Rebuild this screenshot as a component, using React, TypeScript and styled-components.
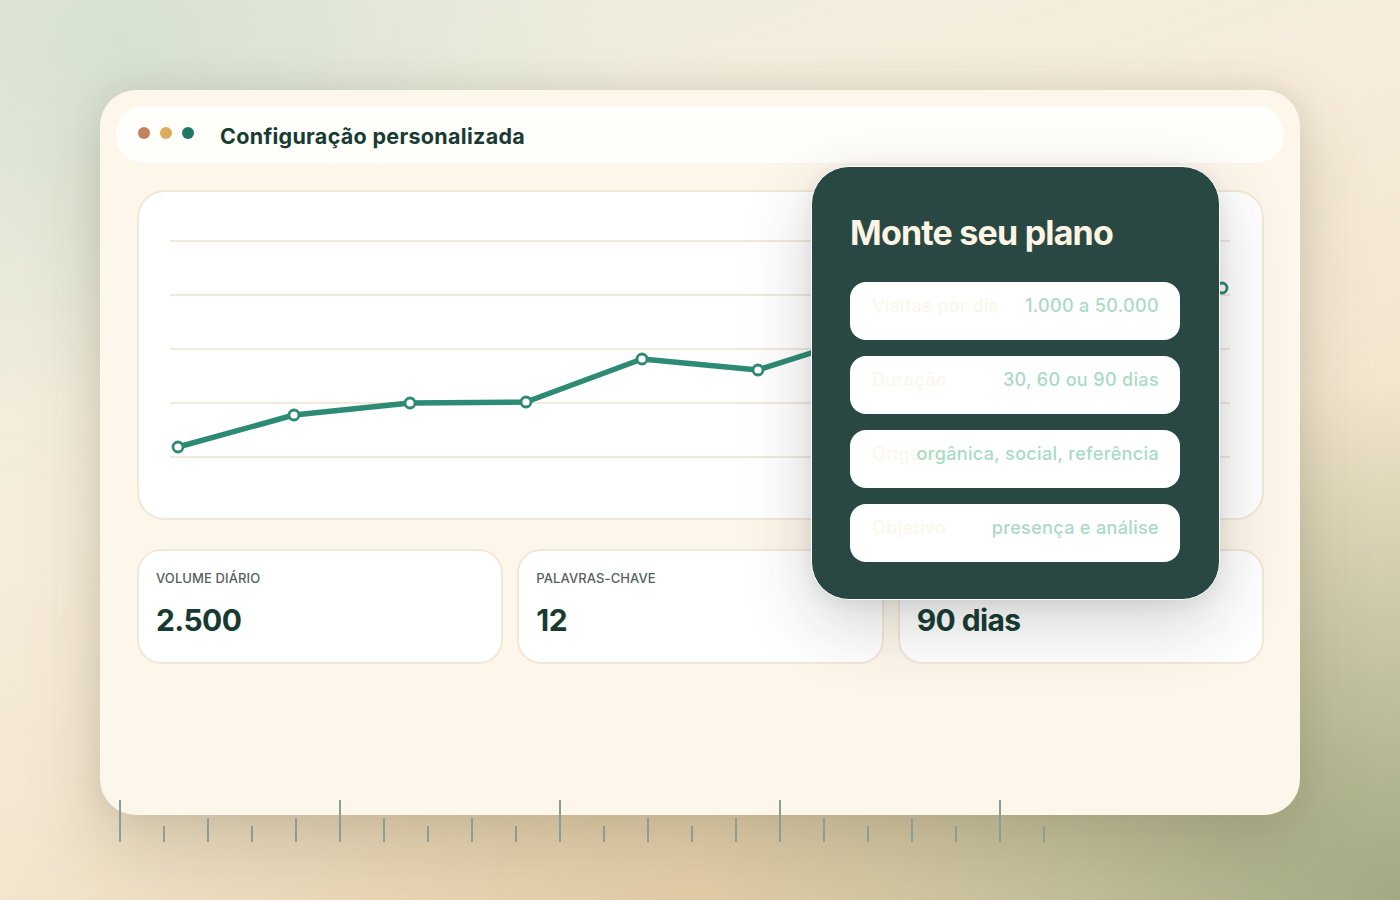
import * as React from 'react';
import styled, { createGlobalStyle } from 'styled-components';

const GlobalStyle = createGlobalStyle`
  html, body {
    margin: 0;
    padding: 0;
  }
  body {
    width: 1400px;
    height: 900px;
    overflow: hidden;
    font-family: Inter, 'Noto Sans', 'Liberation Sans', sans-serif;
    background:
      radial-gradient(ellipse 520px 380px at 120px 40px, rgba(212, 224, 208, 0.9), rgba(212, 224, 208, 0) 100%),
      radial-gradient(ellipse 700px 520px at 1400px 900px, rgba(160, 170, 130, 1), rgba(170, 178, 140, 0) 100%),
      radial-gradient(ellipse 700px 300px at 700px 900px, rgba(226, 204, 166, 1), rgba(226, 204, 166, 0) 100%),
      linear-gradient(160deg, #eceee0 0%, #f6ecda 40%, #eedcbc 100%);
  }
`;

const points = [
  [41, 257],
  [157, 225],
  [273, 213],
  [389, 212],
  [505, 169],
  [621, 180],
  [737, 143],
  [853, 128],
  [969, 112],
  [1085, 98],
];

const gridLines = [51, 105, 159, 213, 267];

const stats = [
  { label: 'VOLUME DIÁRIO', value: '2.500' },
  { label: 'PALAVRAS-CHAVE', value: '12' },
  { label: 'DURAÇÃO', value: '90 dias' },
];

const planRows = [
  { label: 'Visitas por dia', value: '1.000 a 50.000' },
  { label: 'Duração', value: '30, 60 ou 90 dias' },
  { label: 'Origem', value: 'orgânica, social, referência' },
  { label: 'Objetivo', value: 'presença e análise' },
];

const ticks = Array.from({ length: 22 }, (_, i) => i);

const App: React.FC = () => {
  return (
    <>
      <GlobalStyle />
      <Page>
        <Window>
          <TitleBar>
            <Dots>
              <Dot $color='#c0835b' />
              <Dot $color='#dcab5c' />
              <Dot $color='#1f7863' />
            </Dots>
            <Title>Configuração personalizada</Title>
          </TitleBar>

          <ChartCard>
            <svg width='1127' height='330' viewBox='0 0 1127 330'>
              {gridLines.map((y) => (
                <line key={y} x1='33' x2='1093' y1={y} y2={y} stroke='#f1e9da' strokeWidth='2' />
              ))}
              <polyline
                points={points.map((p) => p.join(',')).join(' ')}
                fill='none'
                stroke='#2d8a74'
                strokeWidth='5.5'
                strokeLinejoin='round'
              />
              {points.map(([x, y]) => (
                <circle key={x} cx={x} cy={y} r='5' fill='#ffffff' stroke='#2d8a74' strokeWidth='2.8' />
              ))}
            </svg>
          </ChartCard>

          <StatsRow>
            {stats.map((s) => (
              <StatCard key={s.label}>
                <StatLabel>{s.label}</StatLabel>
                <StatValue>{s.value}</StatValue>
              </StatCard>
            ))}
          </StatsRow>

          <PlanPanel>
            <PlanTitle>Monte seu plano</PlanTitle>
            <PlanList>
              {planRows.map((r) => (
                <PlanRow key={r.label}>
                  <PlanLabel>{r.label}</PlanLabel>
                  <PlanValue>{r.value}</PlanValue>
                </PlanRow>
              ))}
            </PlanList>
          </PlanPanel>

          <Ruler>
            {ticks.map((i) => (
              <Tick key={i} $size={i % 5 === 0 ? 'major' : i % 2 === 0 ? 'mid' : 'minor'} />
            ))}
          </Ruler>
        </Window>
      </Page>
    </>
  );
};

const Page = styled.div`
  width: 1400px;
  height: 900px;
  padding: 90px 100px 0;
  box-sizing: border-box;
`;

const Window = styled.div`
  position: relative;
  width: 1200px;
  height: 725px;
  box-sizing: border-box;
  padding: 16px 16px 0;
  background: #fdf7eb;
  border-radius: 36px;
  box-shadow: 0 30px 70px rgba(90, 80, 50, 0.22), 0 -4px 30px rgba(90, 90, 70, 0.1);
  display: flex;
  flex-direction: column;
`;

const TitleBar = styled.div`
  height: 57px;
  border-radius: 28px;
  background: #fffefb;
  display: flex;
  align-items: center;
  padding: 0 22px;
  column-gap: 26px;
`;

const Dots = styled.div`
  display: flex;
  column-gap: 10px;
  margin-top: -4px;
`;

const Dot = styled.span<{ $color: string }>`
  width: 12px;
  height: 12px;
  border-radius: 50%;
  background: ${({ $color }) => $color};
`;

const Title = styled.h1`
  margin: 2px 0 0;
  font-size: 21.5px;
  font-weight: 700;
  color: #183b32;
  letter-spacing: 0.3px;
`;

const ChartCard = styled.div`
  margin: 27px 20px 0 21px;
  height: 330px;
  box-sizing: border-box;
  background: #ffffff;
  border: 2px solid #f1e8d7;
  border-radius: 28px;
  overflow: hidden;

  svg {
    display: block;
    margin: -2px;
  }
`;

const StatsRow = styled.div`
  margin: 29px 20px 0 21px;
  display: grid;
  grid-template-columns: repeat(3, 1fr);
  column-gap: 14px;
`;

const StatCard = styled.div`
  height: 115px;
  box-sizing: border-box;
  padding: 19px 17px;
  background: #ffffff;
  border: 2px solid #f1e8d7;
  border-radius: 24px;
`;

const StatLabel = styled.div`
  font-size: 13px;
  font-weight: 500;
  color: #56625d;
  letter-spacing: 0.1px;
`;

const StatValue = styled.div`
  margin-top: 16px;
  font-size: 30px;
  font-weight: 700;
  letter-spacing: -0.6px;
  color: #173b31;
`;

const PlanPanel = styled.div`
  position: absolute;
  left: 711px;
  top: 76px;
  width: 409px;
  height: 434px;
  box-sizing: border-box;
  padding: 46px 39px 0 38px;
  background: #2a4843;
  border: 1.5px solid #ffffff;
  border-radius: 38px;
  box-shadow: 0 24px 70px rgba(40, 40, 40, 0.2), 0 4px 18px rgba(40, 40, 40, 0.08);
`;

const PlanTitle = styled.h2`
  margin: 0;
  font-size: 34px;
  font-weight: 700;
  letter-spacing: -0.8px;
  line-height: 40px;
  color: #fdf5e4;
`;

const PlanList = styled.div`
  margin-top: 29px;
  display: flex;
  flex-direction: column;
  row-gap: 16px;
`;

const PlanRow = styled.div`
  height: 58px;
  box-sizing: border-box;
  padding: 13px 21px 0 22px;
  background: #ffffff;
  border-radius: 16px;
  display: grid;
  align-items: start;
  font-size: 18px;
  font-weight: 500;
  letter-spacing: 0.35px;
  line-height: 22px;
  white-space: nowrap;
`;

const PlanLabel = styled.span`
  grid-area: 1 / 1;
  justify-self: start;
  color: #fcf7ea;
`;

const PlanValue = styled.span`
  grid-area: 1 / 1;
  justify-self: end;
  color: #a8dbc5;
`;

const Ruler = styled.div`
  position: absolute;
  left: 19px;
  top: 710px;
  display: flex;
  align-items: flex-end;
  column-gap: 42px;
  height: 42px;
`;

const Tick = styled.span<{ $size: 'major' | 'mid' | 'minor' }>`
  width: 2px;
  background: #8a9d97;
  height: ${({ $size }) => ($size === 'major' ? 42 : $size === 'mid' ? 24 : 16)}px;
`;

export default App;
